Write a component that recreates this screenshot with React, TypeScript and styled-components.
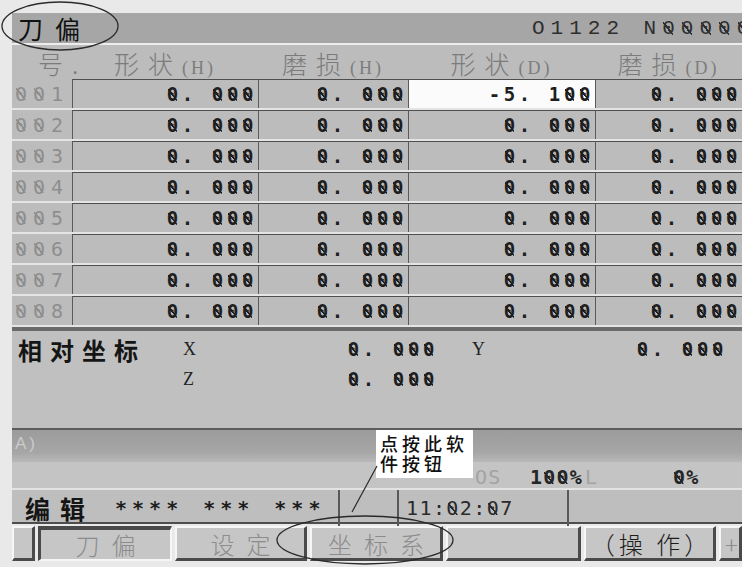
import React from "react";
import styled, { createGlobalStyle, css } from "styled-components";

const GlobalStyle = createGlobalStyle`
  html, body {
    margin: 0;
    padding: 0;
    background: #e9e9e9;
  }
`;

const CJK = `"Noto Sans CJK SC", "Noto Sans", sans-serif`;
const MONO = `"DejaVu Sans Mono", "Liberation Mono", monospace`;

// CNC screens draw zero with a slash through it
const Zero = styled.span`
  display: inline-block;
  background-image: linear-gradient(
    to top right,
    transparent 44.5%,
    currentColor 44.5%,
    currentColor 55.5%,
    transparent 55.5%
  );
  background-repeat: no-repeat;
  background-size: 0.48em 0.62em;
  background-position: 0.06em 60%;
`;

const Num = ({ text }: { text: string }) => (
  <>
    {text.split("").map((c, i) => (c === "0" ? <Zero key={i}>0</Zero> : c))}
  </>
);

const Page = styled.div`
  position: relative;
  width: 742px;
  height: 567px;
  overflow: hidden;
  box-sizing: border-box;
  padding: 13px 0 0 12px;
  background: #e9e9e9;
`;

const Screen = styled.div`
  display: flex;
  flex-direction: column;
  width: 730px;
  background: #bcbcbc;
`;

const TitleBar = styled.div`
  display: grid;
  grid-template-columns: 520px 1fr;
  align-items: center;
  height: 30px;
  background: #a6a6a6;
  border-bottom: 2px solid #ededed;
  overflow: hidden;
`;

const ScreenTitle = styled.div`
  padding-left: 6px;
  font-family: ${CJK};
  font-size: 25px;
  letter-spacing: 12px;
  color: #111;
  line-height: 30px;
`;

const ProgramNo = styled.div`
  font-family: "Liberation Mono", monospace;
  font-size: 21px;
  letter-spacing: 6px;
  color: #2e2e2e;
  white-space: nowrap;
`;

const COLS = "60px 186px 150px 187px 147px";

const HeaderRow = styled.div`
  display: grid;
  grid-template-columns: ${COLS};
  height: 34px;
  align-items: center;
`;

const HeaderCell = styled.div<{ $left?: boolean }>`
  display: flex;
  align-items: baseline;
  justify-content: ${(p) => (p.$left ? "flex-start" : "center")};
  padding-left: ${(p) => (p.$left ? "26px" : "0")};
  font-family: ${CJK};
  font-size: 25px;
  font-weight: 300;
  letter-spacing: 9px;
  color: #7b7b7b;
  white-space: nowrap;
`;

const Unit = styled.span`
  font-family: "Liberation Serif", serif;
  font-size: 18px;
  letter-spacing: 3px;
  color: #7d7d7d;
`;

const DataRow = styled.div`
  display: grid;
  grid-template-columns: ${COLS};
  height: 31px;
  box-sizing: border-box;
  border-bottom: 2px solid #e4e4e4;
`;

const RowNo = styled.div`
  display: flex;
  align-items: center;
  padding-left: 3px;
  font-family: ${MONO};
  font-size: 20px;
  letter-spacing: 6px;
  color: #8e8e8e;
  white-space: pre;
`;

const numText = css`
  font-family: ${MONO};
  font-size: 19px;
  font-weight: bold;
  letter-spacing: 3.6px;
  color: #1e1e1e;
  white-space: pre;
`;

const ValueCell = styled.div<{ $active?: boolean }>`
  display: flex;
  align-items: center;
  justify-content: flex-end;
  padding-right: 1px;
  border-top: 1px solid #4f4f4f;
  border-left: 1px solid #5a5a5a;
  background: ${(p) => (p.$active ? "#fbfbfb" : "#bcbcbc")};
  ${numText}
`;

const CoordPanel = styled.div`
  display: grid;
  grid-template-columns: 165px 30px 225px 34px 30px 225px;
  grid-auto-rows: 30px;
  align-items: center;
  height: 101px;
  box-sizing: border-box;
  padding: 3px 0 0 6px;
  border-top: 4px solid #6a6a6a;
  background: #c0c0c0;
`;

const CoordLabel = styled.div`
  font-family: ${CJK};
  font-size: 24px;
  font-weight: bold;
  letter-spacing: 8px;
  color: #151515;
`;

const Axis = styled.div`
  font-family: "Liberation Serif", serif;
  font-size: 18px;
  color: #222;
`;

const CoordValue = styled.div`
  text-align: right;
  ${numText}
`;

const InputBand = styled.div`
  height: 34px;
  box-sizing: border-box;
  border-top: 2px solid #5c5c5c;
  padding: 4px 0 0 3px;
  background: linear-gradient(#9c9c9c, #a6a6a6 70%, #b8b8b8);
  font-family: "Liberation Sans", sans-serif;
  font-size: 17px;
  letter-spacing: 3px;
  color: #cacaca;
`;

const StatusRow = styled.div`
  display: grid;
  grid-template-columns: 463px 55px 55px 88px 1fr;
  align-items: center;
  height: 28px;
  box-sizing: border-box;
  padding-top: 3px;
  border-bottom: 2px solid #e3e3e3;
  background: #c4c4c4;
`;

const StatusText = styled.div<{ $dim?: boolean }>`
  font-family: ${MONO};
  font-size: 20px;
  font-weight: ${(p) => (p.$dim ? "normal" : "bold")};
  letter-spacing: 1.2px;
  color: ${(p) => (p.$dim ? "#a3a3a3" : "#262626")};
  white-space: pre;
`;

const ModeRow = styled.div`
  display: grid;
  grid-template-columns: 326px 59px 170px 1fr;
  height: 34px;
  box-sizing: border-box;
  padding-bottom: 4px;
  border-bottom: 2px solid #4e4e4e;
  background: #bebebe;
`;

const ModeBox = styled.div<{ $first?: boolean }>`
  display: flex;
  align-items: center;
  gap: 20px;
  padding-left: ${(p) => (p.$first ? "13px" : "7px")};
  border-left: ${(p) => (p.$first ? "none" : "2px solid #585858")};
`;

const ModeName = styled.span`
  font-family: ${CJK};
  font-size: 25px;
  font-weight: bold;
  letter-spacing: 10px;
  color: #151515;
`;

const Stars = styled.span`
  font-family: ${MONO};
  font-size: 20px;
  font-weight: bold;
  letter-spacing: 5px;
  color: #1e1e1e;
`;

const Clock = styled.span`
  font-family: ${MONO};
  font-size: 20px;
  letter-spacing: 1.4px;
  color: #2a2a2a;
  white-space: pre;
`;

const SoftKeys = styled.div`
  display: grid;
  grid-template-columns: 23px 134px 132px 133px 135px 132px 1fr;
  column-gap: 3px;
  height: 35px;
  margin-top: 2px;
  background: #e9e9e9;
`;

const SoftKey = styled.div<{ $pressed?: boolean; $dark?: boolean; $edge?: boolean }>`
  display: flex;
  align-items: center;
  justify-content: ${(p) => (p.$edge ? "flex-start" : "center")};
  box-sizing: border-box;
  background: #c6c6c6;
  font-family: ${CJK};
  font-size: 24px;
  font-weight: 300;
  letter-spacing: ${(p) => (p.$dark || p.$edge ? "4px" : "12px")};
  padding-left: ${(p) => (p.$dark || p.$edge ? "4px" : "12px")};
  color: ${(p) => (p.$dark ? "#1d1d1d" : "#8c8c8c")};
  white-space: nowrap;
  overflow: hidden;
  border-style: solid;
  ${(p) =>
    p.$pressed
      ? css`
          border-width: 4px 2px 2px 3px;
          border-color: #4a4a4a #f6f6f6 #f6f6f6 #4a4a4a;
        `
      : css`
          border-width: 2px 3px 3px 2px;
          border-color: #f6f6f6 #4a4a4a #4a4a4a #f6f6f6;
        `}
`;

const Callout = styled.div`
  position: absolute;
  left: 376px;
  top: 430px;
  width: 97px;
  height: 48px;
  box-sizing: border-box;
  padding: 3px 0 0 4px;
  background: #ffffff;
  font-family: ${CJK};
  font-size: 18px;
  font-weight: 500;
  letter-spacing: 4px;
  line-height: 20px;
  color: #111;
`;

const Marks = styled.svg`
  position: absolute;
  left: 0;
  top: 0;
  pointer-events: none;
`;

const rows = [
  { no: "001", v: ["0. 000", "0. 000", "-5. 100", "0. 000"], active: 2 },
  { no: "002", v: ["0. 000", "0. 000", "0. 000", "0. 000"] },
  { no: "003", v: ["0. 000", "0. 000", "0. 000", "0. 000"] },
  { no: "004", v: ["0. 000", "0. 000", "0. 000", "0. 000"] },
  { no: "005", v: ["0. 000", "0. 000", "0. 000", "0. 000"] },
  { no: "006", v: ["0. 000", "0. 000", "0. 000", "0. 000"] },
  { no: "007", v: ["0. 000", "0. 000", "0. 000", "0. 000"] },
  { no: "008", v: ["0. 000", "0. 000", "0. 000", "0. 000"] },
];

export default function App() {
  return (
    <Page>
      <GlobalStyle />
      <Screen>
        <TitleBar>
          <ScreenTitle>刀偏</ScreenTitle>
          <ProgramNo>
            O1122 N<Num text="00000" />
          </ProgramNo>
        </TitleBar>

        <HeaderRow>
          <HeaderCell $left>号.</HeaderCell>
          <HeaderCell>
            形状<Unit>(H)</Unit>
          </HeaderCell>
          <HeaderCell>
            磨损<Unit>(H)</Unit>
          </HeaderCell>
          <HeaderCell>
            形状<Unit>(D)</Unit>
          </HeaderCell>
          <HeaderCell>
            磨损<Unit>(D)</Unit>
          </HeaderCell>
        </HeaderRow>

        {rows.map((r) => (
          <DataRow key={r.no}>
            <RowNo>
              <Num text={r.no} />
            </RowNo>
            {r.v.map((val, i) => (
              <ValueCell key={i} $active={r.active === i}>
                <Num text={val} />
              </ValueCell>
            ))}
          </DataRow>
        ))}

        <CoordPanel>
          <CoordLabel>相对坐标</CoordLabel>
          <Axis>X</Axis>
          <CoordValue>
            <Num text="0. 000" />
          </CoordValue>
          <div />
          <Axis>Y</Axis>
          <CoordValue>
            <Num text="0. 000" />
          </CoordValue>
          <div />
          <Axis>Z</Axis>
          <CoordValue>
            <Num text="0. 000" />
          </CoordValue>
        </CoordPanel>

        <InputBand>A)</InputBand>

        <StatusRow>
          <div />
          <StatusText $dim>OS</StatusText>
          <StatusText>
            <Num text="100%" />
          </StatusText>
          <StatusText $dim>L</StatusText>
          <StatusText>
            <Num text="0%" />
          </StatusText>
        </StatusRow>

        <ModeRow>
          <ModeBox $first>
            <ModeName>编辑</ModeName>
            <Stars>****</Stars>
            <Stars>***</Stars>
            <Stars>***</Stars>
          </ModeBox>
          <ModeBox />
          <ModeBox>
            <Clock>
              <Num text="11:02:07" />
            </Clock>
          </ModeBox>
          <ModeBox />
        </ModeRow>
      </Screen>

      <SoftKeys>
        <SoftKey />
        <SoftKey $pressed>刀偏</SoftKey>
        <SoftKey>设定</SoftKey>
        <SoftKey>坐标系</SoftKey>
        <SoftKey />
        <SoftKey $dark>（操 作）</SoftKey>
        <SoftKey $edge>+</SoftKey>
      </SoftKeys>

      <Callout>
        点按此软
        <br />
        件按钮
      </Callout>

      <Marks width="742" height="567" viewBox="0 0 742 567">
        <ellipse cx="60" cy="26" rx="58" ry="24" fill="none" stroke="#2a2a2a" strokeWidth="1.3" />
        <ellipse cx="365" cy="540" rx="88" ry="24" fill="none" stroke="#2a2a2a" strokeWidth="1.3" />
        <line x1="377" y1="466" x2="352" y2="512" stroke="#2a2a2a" strokeWidth="1.2" />
      </Marks>
    </Page>
  );
}
